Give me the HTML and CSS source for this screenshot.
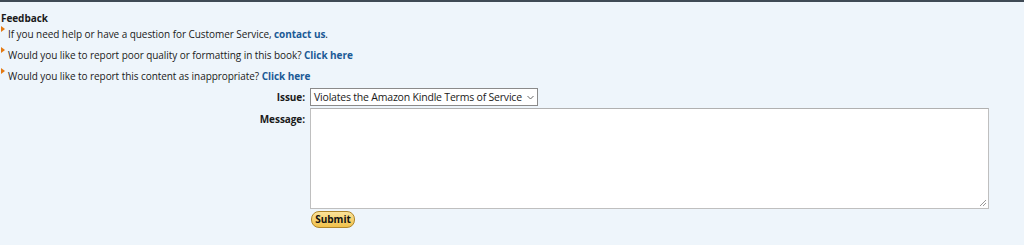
FILE: index.html
```html
<!DOCTYPE html>
<html>
<head>
<meta charset="utf-8">
<link rel="stylesheet" href="styles.css">
</head>
<body>
<div class="page">
  <div class="title">Feedback</div>
  <ul class="list">
    <li><span class="arrow"></span><span class="txt">If you need help or have a question for Customer Service, <a href="#">contact us</a>.</span></li>
    <li><span class="arrow"></span><span class="txt">Would you like to report poor quality or formatting in this book? <a href="#">Click here</a></span></li>
    <li><span class="arrow"></span><span class="txt">Would you like to report this content as inappropriate? <a href="#">Click here</a></span></li>
  </ul>
  <div class="form">
    <div class="label issue-label">Issue:</div>
    <div class="field">
      <div class="select"><span class="opt">Violates the Amazon Kindle Terms of Service</span><svg class="chev" width="7" height="5" viewBox="0 0 7 5"><path d="M0.5 1 L3.5 4 L6.5 1" fill="none" stroke="#666" stroke-width="1"/></svg></div>
    </div>
    <div class="label msg-label">Message:</div>
    <div class="field">
      <div class="textarea"><svg class="grip" width="8" height="8" viewBox="0 0 8 8"><path d="M7 1 L1 7 M7 4 L4 7" stroke="#999" stroke-width="1"/></svg></div>
      <button class="submit">Submit</button>
    </div>
  </div>
</div>
</body>
</html>
```

FILE: styles.css
```css
html, body {
  margin: 0;
  padding: 0;
  background: #eef5fb;
}
body {
  font-family: "Open Sans", "DejaVu Sans", sans-serif;
  font-size: 10px;
  letter-spacing: -0.06px;
  color: #1a1a1a;
  border-top: 2px solid #3f4a55;
  height: 243px;
  overflow: hidden;
}
.page {
  padding: 9px 0 0 1px;
}
.title {
  font-weight: bold;
  line-height: 14px;
}
.list {
  list-style: none;
  margin: 0;
  padding: 0;
}
.list li {
  display: flex;
  height: 21px;
  align-items: flex-start;
}
.arrow {
  width: 0;
  height: 0;
  border-top: 3px solid transparent;
  border-bottom: 3px solid transparent;
  border-left: 4px solid #e47911;
  margin-top: 1px;
  margin-right: 3px;
}
.txt {
  margin-top: 2px;
  line-height: 14px;
}
a {
  color: #1b5a96;
  font-weight: bold;
  text-decoration: none;
}
.form {
  display: grid;
  grid-template-columns: 304px 680px;
  column-gap: 5px;
  row-gap: 2px;
  margin-top: 0;
}
.label {
  text-align: right;
  font-weight: bold;
  line-height: 14px;
}
.issue-label { padding-top: 2px; }
.msg-label { padding-top: 4px; }
.select {
  display: flex;
  align-items: center;
  height: 16px;
  width: 220px;
  border: 1px solid #8a8a8a;
  background: #fff;
  padding: 0 3px 0 3px;
  line-height: 14px;
  justify-content: space-between;
  white-space: nowrap;
}
.opt { font-size: 10.5px; letter-spacing: -0.2px; }
.textarea {
  position: relative;
  width: 677px;
  height: 99px;
  background: #fff;
  border: 1px solid #bfbfbf;
  border-top-color: #b0b0b0;
}
.grip {
  position: absolute;
  right: 1px;
  bottom: 1px;
}
.submit {
  display: block;
  margin: 2px 0 0 1px;
  width: 44px;
  height: 17px;
  padding: 0;
  border: 1px solid #b0862a;
  border-radius: 8px;
  background: linear-gradient(#fbe39a, #f0c14b);
  font-family: "Open Sans", "DejaVu Sans", sans-serif;
  font-size: 10px;
  font-weight: bold;
  color: #111;
  line-height: 13px;
}
```
